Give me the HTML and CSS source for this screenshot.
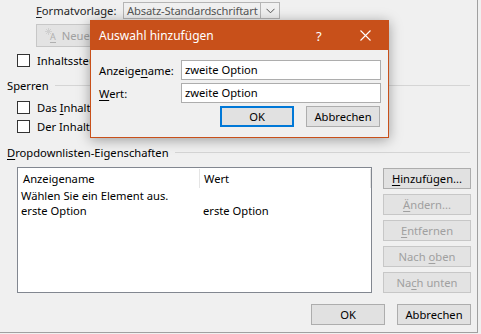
FILE: index.html
```html
<!DOCTYPE html>
<html lang="de">
<head>
<meta charset="utf-8">
<link rel="stylesheet" href="styles.css">
</head>
<body>
<div class="frame">
  <div class="row-format">
    <span class="lbl"><u>F</u>ormatvorlage:</span>
    <div class="combo">
      <span class="combo-text">Absatz-Standardschriftart</span>
      <span class="combo-arrow"><svg width="9" height="6" viewBox="0 0 9 6"><path d="M0.5 0.8 L4.5 4.8 L8.5 0.8" fill="none" stroke="#555" stroke-width="1"/></svg></span>
    </div>
  </div>
  <div class="row-new">
    <button class="btn btn-new" disabled>
      <span class="new-icon">
        <svg class="spark" width="7" height="7" viewBox="0 0 7 7"><path d="M3.5 0 V7 M0 3.5 H7 M1 1 L6 6 M6 1 L1 6" stroke="#d0d0d0" stroke-width="1"/></svg>
        <span class="icon-a">A</span>
      </span>
      <span>Neue Formatvorlage...</span>
    </button>
  </div>
  <label class="cb-row cb-first"><span class="cb"></span><span>Inhaltssteuerelement entfernen, wenn Inhalte bearbeitet werden</span></label>

  <div class="section sec-lock"><span>Sperren</span><span class="sep"></span></div>
  <label class="cb-row cb-lock1"><span class="cb"></span><span>Das <u>I</u>nhaltssteuerelement kann nicht gelöscht werden</span></label>
  <label class="cb-row cb-lock2"><span class="cb"></span><span>Der Inhalt kann nicht bearbeitet werden</span></label>

  <div class="section sec-dd"><span><u>D</u>ropdownlisten-Eigenschaften</span><span class="sep"></span></div>

  <div class="dd-area">
    <div class="list">
      <div class="list-head">
        <span class="col-a">Anzeigename</span>
        <span class="col-b">Wert</span>
        <span class="col-c"></span>
      </div>
      <div class="list-row"><span class="cell-a">Wählen Sie ein Element aus.</span><span class="cell-b"></span></div>
      <div class="list-row"><span class="cell-a">erste Option</span><span class="cell-b">erste Option</span></div>
    </div>
    <div class="side-btns">
      <button class="btn"><u>H</u>inzufügen...</button>
      <button class="btn" disabled><u>Ä</u>ndern...</button>
      <button class="btn" disabled><u>E</u>ntfernen</button>
      <button class="btn" disabled>Nach <u>o</u>ben</button>
      <button class="btn" disabled>Na<u>c</u>h unten</button>
    </div>
  </div>

  <div class="bottom-btns">
    <button class="btn btn-wide">OK</button>
    <button class="btn btn-wide">Abbrechen</button>
  </div>

  <div class="dialog">
    <div class="dlg-title">
      <span class="dlg-caption">Auswahl hinzufügen</span>
      <span class="dlg-help">?</span>
      <svg class="dlg-close" width="11" height="11" viewBox="0 0 11 11"><path d="M0.5 0.5 L10.5 10.5 M10.5 0.5 L0.5 10.5" stroke="#fff" stroke-width="1.1"/></svg>
    </div>
    <div class="dlg-body">
      <div class="field"><span class="field-lbl">Anzeige<u>n</u>ame:</span><span class="input">zweite Option</span></div>
      <div class="field"><span class="field-lbl"><u>W</u>ert:</span><span class="input">zweite Option</span></div>
      <div class="dlg-btns">
        <button class="btn btn-wide btn-default">OK</button>
        <button class="btn btn-wide">Abbrechen</button>
      </div>
    </div>
  </div>
</div>
</body>
</html>
```

FILE: styles.css
```css
* { box-sizing: border-box; }
html, body { margin: 0; padding: 0; }
body {
  background: #f0f0f0;
  font-family: "Noto Sans", "Open Sans", sans-serif;
  font-size: 11.2px;
  color: #000;
  width: 481px;
  height: 334px;
  overflow: hidden;
}
u { text-decoration: underline; text-underline-offset: 2px; }
.frame {
  position: relative;
  width: 478px;
  height: 333px;
  border-right: 1px solid #a0a0a0;
  border-bottom: 1px solid #a0a0a0;
  padding-top: 2px;
}
.row-format {
  display: flex;
  align-items: center;
  height: 17px;
  padding-left: 36px;
}
.lbl { width: 87px; color: #222; }
.combo {
  display: flex;
  height: 17px;
  border: 1px solid #b5b5b5;
  background: #f0f0f0;
}
.combo-text {
  width: 137px;
  padding-left: 3px;
  color: #555;
  line-height: 15px;
  letter-spacing: -0.15px;
  white-space: nowrap;
  overflow: hidden;
  border-right: 1px solid #b5b5b5;
}
.combo-arrow {
  width: 18px;
  display: flex;
  align-items: center;
  justify-content: center;
}
.row-new { padding-left: 36px; margin-top: 5px; height: 23px; }
.btn {
  font: inherit;
  color: #000;
  background: #e1e1e1;
  border: 1px solid #adadad;
  padding: 0;
  margin: 0;
  height: 21px;
  white-space: nowrap;
}
.btn:disabled {
  color: #a0a0a0;
  background: #e3e3e3;
  border-color: #c7c7c7;
}
.btn-new {
  height: 23px;
  width: 130px;
  display: flex;
  align-items: center;
  gap: 6px;
  padding-left: 8px;
}
.new-icon {
  display: flex;
  align-items: flex-start;
  width: 14px;
  height: 14px;
}
.spark { flex: none; margin-top: -1px; }
.icon-a {
  font-size: 9px;
  line-height: 10px;
  margin-top: 3px;
  margin-left: -2px;
  color: #b0b0b0;
  border-bottom: 1px solid #b0b0b0;
}
.cb-row {
  display: flex;
  align-items: center;
  gap: 7px;
  padding-left: 17px;
  height: 13px;
  white-space: nowrap;
}
.cb {
  width: 13px;
  height: 13px;
  border: 1px solid #333;
  background: #fff;
  flex: none;
}
.cb-first { margin-top: 7px; }
.section {
  display: flex;
  align-items: center;
  padding-left: 7px;
  padding-right: 7px;
  height: 16px;
}
.sep { flex: 1; height: 1px; background: #d5d5d5; margin-left: 6px; }
.sec-lock { margin-top: 10px; }
.cb-lock1 { margin-top: 8px; }
.cb-lock2 { margin-top: 6px; }
.sec-dd { margin-top: 11px; }
.dd-area {
  display: flex;
  gap: 11px;
  padding-left: 17px;
  margin-top: 7px;
}
.list {
  width: 355px;
  height: 126px;
  background: #fff;
  border: 1px solid #828790;
}
.list-head { display: flex; height: 20px; align-items: center; }
.col-a { width: 182px; padding-left: 5px; border-right: 1px solid #e5e5e5; line-height: 19px; }
.col-b { width: 170px; padding-left: 4px; line-height: 19px; }
.col-c { width: 1px; height: 19px; background: #e5e5e5; }
.list-row { display: flex; height: 15px; line-height: 15px; }
.cell-a { width: 182px; padding-left: 3px; }
.cell-b { padding-left: 3px; }
.side-btns {
  display: flex;
  flex-direction: column;
  gap: 5px;
  margin-top: 1px;
}
.side-btns .btn { width: 88px; }
.bottom-btns {
  display: flex;
  justify-content: flex-end;
  gap: 12px;
  padding-right: 6px;
  margin-top: 11px;
}
.btn-wide { width: 74px; }
.dialog {
  position: absolute;
  left: 90px;
  top: 20px;
  width: 299px;
  height: 118px;
  background: #f0f0f0;
  border: 1px solid #c8501a;
  box-shadow: 0 2px 12px rgba(0,0,0,0.35);
}
.dlg-title {
  display: flex;
  align-items: center;
  height: 29px;
  background: #c8501a;
  color: #fff;
  padding-left: 8px;
  font-size: 12px;
}
.dlg-caption { flex: 1; }
.dlg-help { width: 44px; font-size: 13px; }
.dlg-close { margin-right: 17px; }
.dlg-body { padding: 10px 7px 0 8px; }
.field { display: flex; align-items: center; height: 20px; margin-bottom: 3px; }
.field-lbl { width: 82px; }
.input {
  width: 200px;
  height: 20px;
  border: 1px solid #adadad;
  background: #fff;
  padding-left: 3px;
  line-height: 18px;
}
.dlg-btns {
  display: flex;
  justify-content: flex-end;
  gap: 12px;
  margin-top: 1px;
  padding-right: 1px;
}
.btn-default { border: 2px solid #0078d7; }
```
